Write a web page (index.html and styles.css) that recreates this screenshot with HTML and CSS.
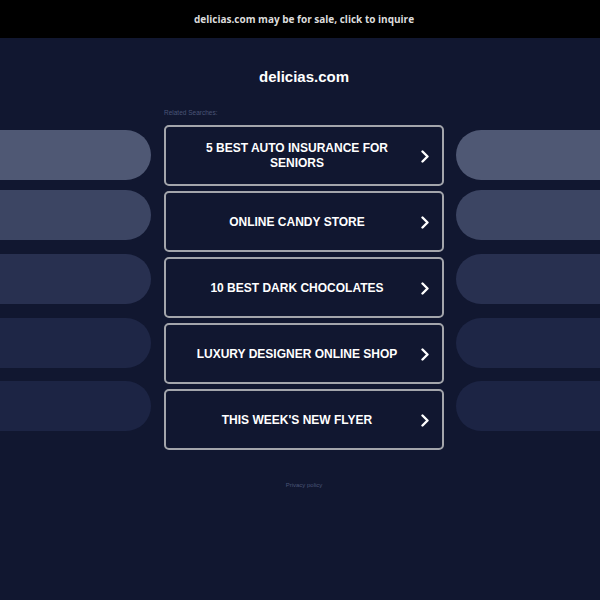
FILE: index.html
```html
<!DOCTYPE html>
<html>
<head>
<meta charset="utf-8">
<link rel="stylesheet" href="styles.css">
</head>
<body>
<div class="topbar">delicias.com may be for sale, click to inquire</div>
<div class="layout">
  <div class="header">
    <h1 class="title">delicias.com</h1>
    <div class="label">Related Searches:</div>
  </div>
  <div class="pills pills-left">
    <div class="pill p1"></div>
    <div class="pill p2"></div>
    <div class="pill p3"></div>
    <div class="pill p4"></div>
    <div class="pill p5"></div>
  </div>
  <div class="links">
    <a class="link"><span class="link-text">5 BEST AUTO INSURANCE FOR SENIORS</span><svg class="chev" viewBox="0 0 8 13"><path d="M1.5 1.5 L6.5 6.5 L1.5 11.5" fill="none" stroke="#fff" stroke-width="2.4" stroke-linecap="round" stroke-linejoin="round"/></svg></a>
    <a class="link"><span class="link-text">ONLINE CANDY STORE</span><svg class="chev" viewBox="0 0 8 13"><path d="M1.5 1.5 L6.5 6.5 L1.5 11.5" fill="none" stroke="#fff" stroke-width="2.4" stroke-linecap="round" stroke-linejoin="round"/></svg></a>
    <a class="link"><span class="link-text">10 BEST DARK CHOCOLATES</span><svg class="chev" viewBox="0 0 8 13"><path d="M1.5 1.5 L6.5 6.5 L1.5 11.5" fill="none" stroke="#fff" stroke-width="2.4" stroke-linecap="round" stroke-linejoin="round"/></svg></a>
    <a class="link"><span class="link-text">LUXURY DESIGNER ONLINE SHOP</span><svg class="chev" viewBox="0 0 8 13"><path d="M1.5 1.5 L6.5 6.5 L1.5 11.5" fill="none" stroke="#fff" stroke-width="2.4" stroke-linecap="round" stroke-linejoin="round"/></svg></a>
    <a class="link"><span class="link-text">THIS WEEK'S NEW FLYER</span><svg class="chev" viewBox="0 0 8 13"><path d="M1.5 1.5 L6.5 6.5 L1.5 11.5" fill="none" stroke="#fff" stroke-width="2.4" stroke-linecap="round" stroke-linejoin="round"/></svg></a>
  </div>
  <div class="pills pills-right">
    <div class="pill p1"></div>
    <div class="pill p2"></div>
    <div class="pill p3"></div>
    <div class="pill p4"></div>
    <div class="pill p5"></div>
  </div>
  <div class="footer">Privacy policy</div>
</div>
</body>
</html>
```
FILE: styles.css
```css
html, body {
  margin: 0;
  padding: 0;
  background: #111730;
  height: 100%;
  overflow: hidden;
}
body {
  font-family: "Liberation Sans", Arial, sans-serif;
}
.topbar {
  height: 38px;
  line-height: 38px;
  background: #000;
  color: #dcdcdc;
  font-family: "Open Sans", "Liberation Sans", sans-serif;
  font-weight: 700;
  font-size: 10px;
  text-align: center;
  padding-left: 8px;
}
.layout {
  display: grid;
  grid-template-columns: 151px 280px 1fr;
  column-gap: 0;
}
.header {
  grid-column: 2;
  grid-row: 1;
  margin-left: 13px;
  margin-right: -13px;
}
.title {
  margin: 30px 0 0;
  font-size: 15px;
  line-height: 18px;
  font-weight: 700;
  color: #fff;
  text-align: center;
}
.label {
  margin-top: 22px;
  font-size: 6.5px;
  line-height: 10px;
  color: #4a5577;
  margin-bottom: 7px;
}
.links {
  grid-column: 2;
  grid-row: 2;
  display: flex;
  flex-direction: column;
  gap: 5px;
  margin-left: 13px;
  margin-right: -13px;
}
.link {
  box-sizing: border-box;
  height: 61px;
  border: 2px solid #a3a5ab;
  border-radius: 5px;
  display: flex;
  align-items: center;
  position: relative;
  padding: 1px 34px 0 20px;
  color: #fff;
}
.link-text {
  flex: 1;
  text-align: center;
  font-weight: 700;
  font-size: 12px;
  line-height: 15px;
}
.chev {
  position: absolute;
  right: 13px;
  top: 50%;
  width: 8px;
  height: 13px;
  margin-top: -6px;
}
.pills {
  grid-row: 2;
  display: flex;
  flex-direction: column;
  padding-top: 5px;
}
.pills-left {
  grid-column: 1;
}
.pills-right {
  grid-column: 3;
  margin-left: 25px;
}
.pill {
  height: 50px;
}
.pills-left .pill {
  border-radius: 0 25px 25px 0;
}
.pills-right .pill {
  border-radius: 25px 0 0 25px;
}
.p1 { background: #4f5874; }
.p2 { background: #3c4563; margin-top: 10px; }
.p3 { background: #283050; margin-top: 14px; }
.p4 { background: #1e2646; margin-top: 14px; }
.p5 { background: #1c2444; margin-top: 13px; }
.footer {
  grid-column: 2;
  grid-row: 3;
  margin-left: 13px;
  margin-right: -13px;
  margin-top: 30px;
  text-align: center;
  font-size: 6px;
  line-height: 10px;
  color: #4a5577;
}
```
